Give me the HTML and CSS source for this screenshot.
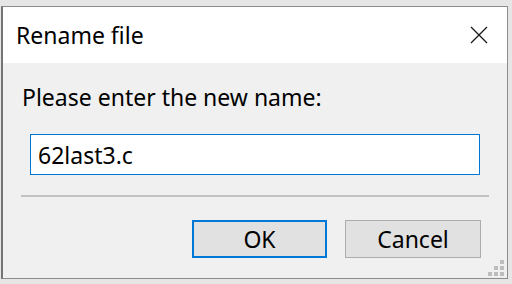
FILE: index.html
```html
<!DOCTYPE html>
<html lang="en">

<head>
    <meta charset="UTF-8">
    <meta name="viewport" content="width=device-width, initial-scale=1.0">
    <title>Rename file</title>
    <link rel="stylesheet" href="styles.css">
</head>

<body>
    <div class="dialog">
        <div class="titlebar">
            <span class="title">Rename file</span>
            <button class="close" aria-label="Close">
                <svg width="18" height="18" viewBox="0 0 18 18">
                    <path d="M1 1 L17 17 M17 1 L1 17" stroke="#1a1a1a" stroke-width="1.3" fill="none" />
                </svg>
            </button>
        </div>
        <div class="content">
            <label class="prompt" for="newName">Please enter the new name:</label>
            <input id="newName" class="name-input" type="text" value="62last3.c">
            <div class="divider"></div>
            <div class="actions">
                <button class="btn btn-ok">OK</button>
                <button class="btn">Cancel</button>
            </div>
        </div>
        <svg class="grip" width="16" height="16" viewBox="0 0 16 16">
            <rect x="12" y="0" width="4" height="4" />
            <rect x="6" y="6" width="4" height="4" />
            <rect x="12" y="6" width="4" height="4" />
            <rect x="0" y="12" width="4" height="4" />
            <rect x="6" y="12" width="4" height="4" />
            <rect x="12" y="12" width="4" height="4" />
        </svg>
    </div>
</body>

</html>
```

FILE: styles.css
```css
*,
html,
body {
    margin: 0;
    padding: 0;
    box-sizing: border-box;
}

body {
    background-color: #e6e6e6;
    padding: 6px 0 0 1px;
    font-family: "Noto Sans", "Open Sans", sans-serif;
    font-size: 23px;
    color: #000;
}

.dialog {
    position: relative;
    width: 507px;
    height: 273px;
    border: 1px solid #8c8c8c;
    border-left: 2px solid #747474;
    background-color: #f0f0f0;
    display: flex;
    flex-direction: column;
}

.titlebar {
    height: 56px;
    background-color: #fff;
    display: flex;
    align-items: center;
    justify-content: space-between;
    padding: 0 19px 0 13px;
}

.title {
    line-height: 56px;
}

.close {
    border: 0;
    background: none;
    width: 18px;
    height: 18px;
    display: flex;
}

.content {
    flex: 1;
    display: flex;
    flex-direction: column;
    padding: 19px 18px 0 18px;
}

.prompt {
    line-height: 30px;
    padding-left: 1px;
}

.name-input {
    margin: 22px 0 0 9px;
    width: 450px;
    height: 41px;
    border: 1px solid #0078d7;
    background-color: #fff;
    padding: 0 7px;
    font-family: inherit;
    font-size: 23px;
    color: #000;
    outline: none;
}

.divider {
    margin-top: 20px;
    height: 2px;
    background-color: #c2c2c2;
}

.actions {
    display: flex;
    justify-content: flex-end;
    gap: 18px;
    margin: 23px 8px 0 0;
}

.btn {
    width: 136px;
    height: 38px;
    border: 1px solid #adadad;
    background-color: #e1e1e1;
    font-family: inherit;
    font-size: 23px;
    color: #000;
}

.btn-ok {
    width: 135px;
    border: 2px solid #0078d7;
}

.grip {
    position: absolute;
    right: 3px;
    bottom: 2px;
    fill: #bdbdbd;
}
```
